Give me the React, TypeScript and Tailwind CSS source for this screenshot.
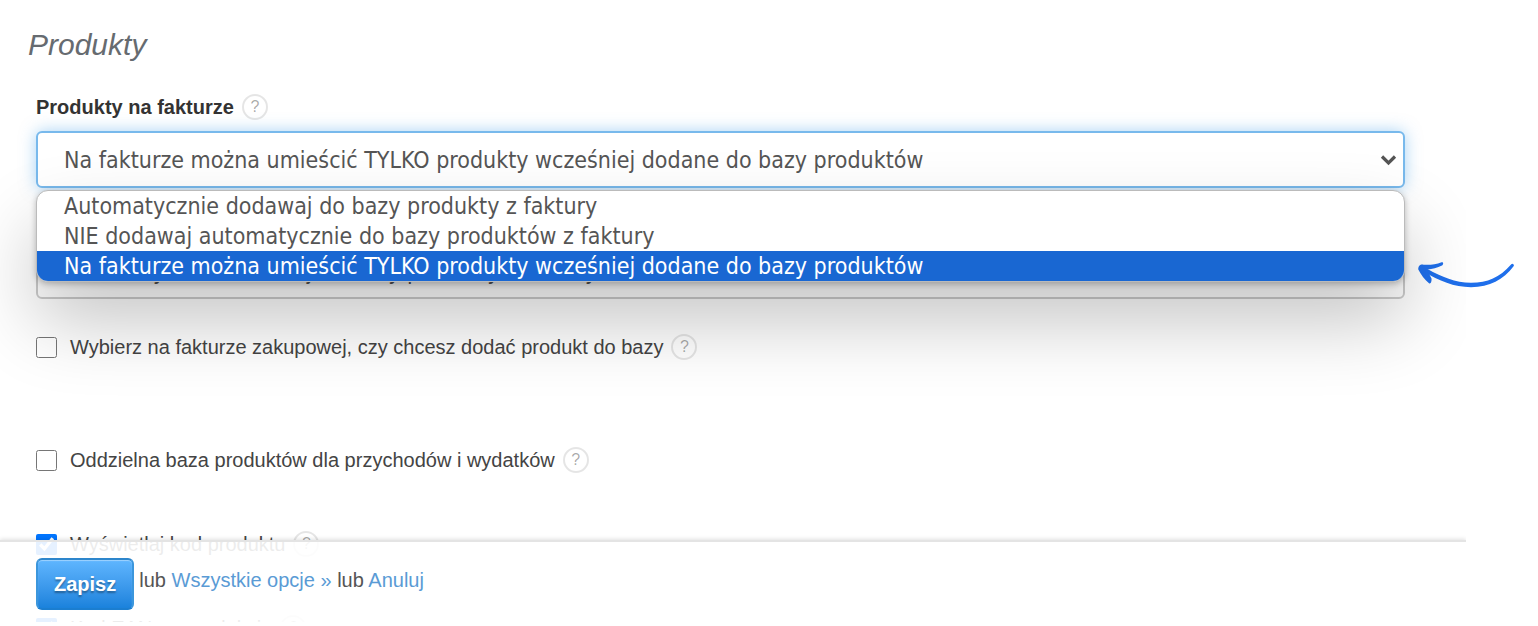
import React, { useState } from 'react';

const options = [
  'Automatycznie dodawaj do bazy produkty z faktury',
  'NIE dodawaj automatycznie do bazy produktów z faktury',
  'Na fakturze można umieścić TYLKO produkty wcześniej dodane do bazy produktów',
];

const Hint: React.FC = () => (
  <button
    type="button"
    aria-label="Pomoc"
    className="ml-2 flex h-[26px] w-[26px] shrink-0 items-center justify-center rounded-full border-2 border-black/10 text-[16px] leading-none text-black/35"
  >
    ?
  </button>
);

interface SelectProps {
  id: string;
  value: string;
  onChange: (value: string) => void;
  label?: string;
  active?: boolean;
}

const Select: React.FC<SelectProps> = ({ id, value, onChange, label, active }) => (
  <div className="relative">
    <select
      id={id}
      aria-label={label}
      value={value}
      onChange={(e) => onChange(e.target.value)}
      className={`block h-[57px] w-full appearance-none rounded-[6px] border-2 bg-white pl-[26px] font-["DejaVu_Sans_Condensed","DejaVu_Sans",sans-serif] text-[23px] text-[#555] outline-none ${
        active ? 'border-[#78b9ec] shadow-[0_0_16px_rgba(82,168,236,0.5)]' : 'border-[#ccc]'
      }`}
    >
      {options.map((option) => (
        <option key={option}>{option}</option>
      ))}
    </select>
    <svg className="pointer-events-none absolute top-[23px] right-[8px]" width="17" height="12" viewBox="0 0 17 12" fill="none">
      <path d="M2 2.5l6.5 6.5L15 2.5" stroke="#555" strokeWidth="3.2" />
    </svg>
  </div>
);

interface CheckRowProps {
  id: string;
  label: string;
  checked?: boolean;
}

const CheckRow: React.FC<CheckRowProps> = ({ id, label, checked }) => (
  <div className="flex h-[28px] items-center">
    <input id={id} type="checkbox" defaultChecked={checked} className="h-[21px] w-[21px] shrink-0" />
    <label htmlFor={id} className="ml-[13px]">
      {label}
    </label>
    <Hint />
  </div>
);

const App: React.FC = () => {
  const [mode, setMode] = useState(options[2]);
  const [expenseMode, setExpenseMode] = useState(options[0]);

  return (
    <div className='relative h-screen overflow-hidden bg-white pr-[72px] pb-1 font-["Liberation_Sans",Arial,sans-serif] text-[20px] leading-[28px] text-[#444]'>
      <main className="relative h-full overflow-hidden pt-[25px]">
        <h1 className="pl-[28px] text-[30px] leading-[40px] text-[#666b70] italic">Produkty</h1>

        <form className="pt-[28px] pr-[61px] pl-[36px]">
          <div className="flex h-[28px] items-center">
            <label htmlFor="mode" className="font-bold text-[#333]">
              Produkty na fakturze
            </label>
            <Hint />
          </div>

          <div className="relative mt-[10px]">
            <Select id="mode" value={mode} onChange={setMode} active />
            <ul
              role="listbox"
              aria-label="Produkty na fakturze"
              className='absolute inset-x-0 top-full z-10 mt-[2px] overflow-hidden rounded-[12px] border border-[#bbb] bg-white font-["DejaVu_Sans_Condensed","DejaVu_Sans",sans-serif] text-[23px] leading-[30px] text-[#555] shadow-[0_2px_6px_rgba(0,0,0,0.25),0_38px_76px_rgba(0,0,0,0.24)]'
            >
              {options.map((option) => (
                <li
                  key={option}
                  role="option"
                  aria-selected={option === mode}
                  onClick={() => setMode(option)}
                  className={`pl-[27px] ${option === mode ? 'bg-[#1967d2] text-white' : ''}`}
                >
                  {option}
                </li>
              ))}
            </ul>
          </div>

          <div className="mt-[54px]">
            <Select id="expense-mode" label="Produkty na wydatkach" value={expenseMode} onChange={setExpenseMode} />
          </div>

          <div className="mt-[34px]">
            <CheckRow id="choose" label="Wybierz na fakturze zakupowej, czy chcesz dodać produkt do bazy" />
          </div>
          <div className="mt-[85px] space-y-[56px]">
            <CheckRow id="separate" label="Oddzielna baza produktów dla przychodów i wydatków" />
            <CheckRow id="code" label="Wyświetlaj kod produktu" checked />
            <CheckRow id="ean" label="Kod EAN na produkcie" checked />
          </div>
        </form>

        <footer className="absolute inset-x-0 bottom-0 z-20 flex h-[82px] items-start border-t-2 border-[#e4e4e4] bg-white/90 pt-[16px] pl-[36px] shadow-[0_-1px_4px_rgba(0,0,0,0.12)]">
          <button
            type="button"
            className="h-[52px] rounded-[6px] border-2 border-t-[#2d86cc] border-r-[#3c96dc] border-b-[#1b7ed0] border-l-[#3c96dc] bg-linear-to-b from-[#5fb6ff] to-[#1a82dc] px-[16px] font-bold text-white shadow-[inset_0_1px_1px_rgba(255,255,255,0.4)] [text-shadow:0_2px_2px_rgba(0,0,0,0.35)]"
          >
            Zapisz
          </button>
          <p className="pt-[8px] pl-[5px] text-[#555]">
            lub{' '}
            <a href="#all" className="text-[#5a9bd5]">
              Wszystkie opcje »
            </a>{' '}
            lub{' '}
            <a href="#cancel" className="text-[#5a9bd5]">
              Anuluj
            </a>
          </p>
        </footer>
      </main>

      {/* hand-drawn arrow pointing at the selected option */}
      <svg className="absolute top-[255px] right-[18px]" width="106" height="40" viewBox="0 0 106 40" fill="#1f6feb">
        <path d="M97.300 9.200C98 8 100.500 9 99.800 11C89 25 76 32 57 32.200C40 32 25 26 10 16.500L13.500 14C28 22 41 27.500 57 27.800C74 27.500 85 23 97.300 9.200Z" />
        <path d="M4.300 14.500C4 11 6.500 9 9.500 9.700C16 10.200 22 9.300 27.500 7.200C30 6.600 29.300 9.800 28 10.600C23.500 13 18 14.300 13.500 14.500C14 17 16 20.500 17.500 23.500C17.800 26 17 29.300 15 28.200C10.500 24.800 7 19.500 4.300 14.500Z" />
      </svg>
    </div>
  );
};

export default App;
